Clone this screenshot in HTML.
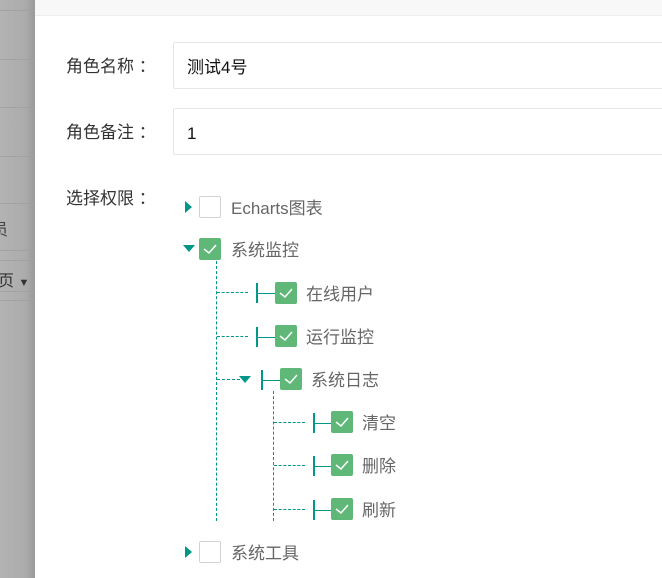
<!DOCTYPE html>
<html><head><meta charset="utf-8"><style>
*{margin:0;padding:0;box-sizing:border-box}
body{width:662px;height:578px;overflow:hidden;background:#fff;position:relative;font-family:"Liberation Sans","Noto Sans CJK SC",sans-serif;color:#333}
.a{position:absolute}
#left{left:0;top:0;width:35px;height:578px;background:linear-gradient(to right,#b3b3b3 0,#acacac 25px,#9a9a9a 35px)}
.hl{position:absolute;left:0;width:35px;height:1px;background:#a2a2a2}
#hdr{left:35px;top:0;width:627px;height:16px;background:#f8f8f8;border-bottom:1px solid #eee}
.lbl{font-size:17px;color:#333;line-height:20px}
.inp{left:173px;width:500px;height:47px;border:1px solid #e6e6e6;border-radius:2px;font-size:17px;padding-left:13px;line-height:49px;color:#111}
.cb{width:22px;height:22px;border-radius:2px}
.on{background:#5fb878}
.off{border:1px solid #d2d2d2;background:#fff}
.on svg{position:absolute;left:3px;top:4px}
.t{font-size:17px;color:#666;line-height:20px}
.dv{border-left:1px dashed #009688;width:0}
.dh{border-top:1px dashed #009688;height:0}
.sv{background:#009688;width:2px;height:20px}
.sh{background:#009688;height:1px}
.tr{width:0;height:0;border-top:6px solid transparent;border-bottom:6px solid transparent;border-left:7px solid #009688}
.td{width:0;height:0;border-left:6px solid transparent;border-right:6px solid transparent;border-top:7px solid #009688}
</style></head><body>
<div id="left" class="a">
<div class="hl" style="top:10px"></div><div class="hl" style="top:59px"></div><div class="hl" style="top:107px"></div><div class="hl" style="top:156px"></div><div class="hl" style="top:203px"></div><div class="hl" style="top:250px"></div><div class="hl" style="top:260px"></div><div class="hl" style="top:291px"></div><div class="hl" style="top:300px"></div>
<div class="a" style="left:-8px;top:216px;font-size:16px;color:#444">员</div>
<div class="a" style="left:-2px;top:267px;font-size:16px;color:#333">页 <span style="font-size:11px">▼</span></div>
</div>
<div id="hdr" class="a"></div>
<div class="a lbl" style="left:66px;top:57px">角色名称 ：</div>
<div class="a inp" style="top:42px">测试4号</div>
<div class="a lbl" style="left:66px;top:123px">角色备注 ：</div>
<div class="a inp" style="top:108px">1</div>
<div class="a lbl" style="left:66px;top:189px">选择权限 ：</div>

<div class="a tr" style="left:185px;top:201px"></div>
<div class="a cb off" style="left:199px;top:196px"></div>
<div class="a t" style="left:231px;top:199px">Echarts图表</div>

<div class="a td" style="left:183px;top:245px"></div>
<div class="a cb on" style="left:199px;top:238px"><svg width="16" height="14"><path d="M2 7 L7 11 L14 3" stroke="#fff" stroke-width="1.5" fill="none"/></svg></div>
<div class="a t" style="left:231px;top:241px">系统监控</div>
<div class="a dv" style="left:216px;top:261px;height:260px"></div>

<div class="a dh" style="left:217px;top:292px;width:31px"></div>
<div class="a sv" style="left:256px;top:283px"></div><div class="a sh" style="left:256px;top:293px;width:19px"></div>
<div class="a cb on" style="left:275px;top:282px"><svg width="16" height="14"><path d="M2 7 L7 11 L14 3" stroke="#fff" stroke-width="1.5" fill="none"/></svg></div>
<div class="a t" style="left:306px;top:285px">在线用户</div>

<div class="a dh" style="left:217px;top:336px;width:31px"></div>
<div class="a sv" style="left:256px;top:327px"></div><div class="a sh" style="left:256px;top:337px;width:19px"></div>
<div class="a cb on" style="left:275px;top:325px"><svg width="16" height="14"><path d="M2 7 L7 11 L14 3" stroke="#fff" stroke-width="1.5" fill="none"/></svg></div>
<div class="a t" style="left:306px;top:328px">运行监控</div>

<div class="a dh" style="left:217px;top:379px;width:23px"></div>
<div class="a td" style="left:239px;top:376px"></div>
<div class="a sv" style="left:261px;top:370px"></div><div class="a sh" style="left:261px;top:380px;width:19px"></div>
<div class="a cb on" style="left:280px;top:368px"><svg width="16" height="14"><path d="M2 7 L7 11 L14 3" stroke="#fff" stroke-width="1.5" fill="none"/></svg></div>
<div class="a t" style="left:311px;top:371px">系统日志</div>
<div class="a dv" style="left:273px;top:391px;height:130px"></div>

<div class="a dh" style="left:274px;top:422px;width:31px"></div>
<div class="a sv" style="left:313px;top:413px"></div><div class="a sh" style="left:313px;top:423px;width:18px"></div>
<div class="a cb on" style="left:331px;top:411px"><svg width="16" height="14"><path d="M2 7 L7 11 L14 3" stroke="#fff" stroke-width="1.5" fill="none"/></svg></div>
<div class="a t" style="left:362px;top:414px">清空</div>

<div class="a dh" style="left:274px;top:465px;width:31px"></div>
<div class="a sv" style="left:313px;top:456px"></div><div class="a sh" style="left:313px;top:466px;width:18px"></div>
<div class="a cb on" style="left:331px;top:454px"><svg width="16" height="14"><path d="M2 7 L7 11 L14 3" stroke="#fff" stroke-width="1.5" fill="none"/></svg></div>
<div class="a t" style="left:362px;top:457px">删除</div>

<div class="a dh" style="left:274px;top:509px;width:31px"></div>
<div class="a sv" style="left:313px;top:500px"></div><div class="a sh" style="left:313px;top:510px;width:18px"></div>
<div class="a cb on" style="left:331px;top:498px"><svg width="16" height="14"><path d="M2 7 L7 11 L14 3" stroke="#fff" stroke-width="1.5" fill="none"/></svg></div>
<div class="a t" style="left:362px;top:501px">刷新</div>

<div class="a tr" style="left:185px;top:546px"></div>
<div class="a cb off" style="left:199px;top:541px"></div>
<div class="a t" style="left:231px;top:544px">系统工具</div>
</body></html>
